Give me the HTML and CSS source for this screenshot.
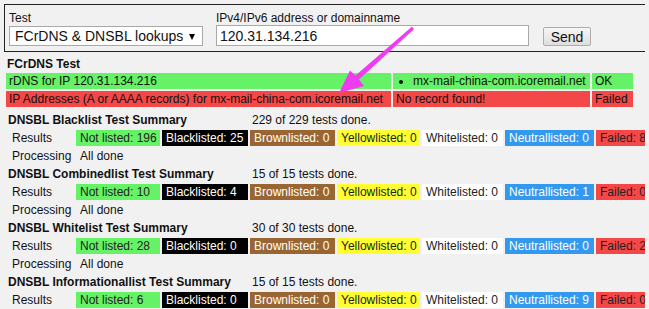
FILE: index.html
```html
<!DOCTYPE html>
<html lang="en">
<head>
  <meta charset="UTF-8">
  <title>FCrDNS &amp; DNSBL lookups</title>
  <link rel="stylesheet" href="styles.css">
</head>
<body>
  <form class="lookup">
    <div class="field field-test">
      <label>Test</label>
      <span class="select-wrap">
        <select>
          <option>FCrDNS &amp; DNSBL lookups</option>
        </select>
      </span>
    </div>
    <div class="field field-host">
      <label>IPv4/IPv6 address or domainname</label>
      <input type="text" value="120.31.134.216">
    </div>
    <button type="button">Send</button>
  </form>

  <h2 class="test-title">FCrDNS Test</h2>
  <table class="fcrdns">
    <colgroup>
      <col class="c-desc"><col class="c-result"><col class="c-status">
    </colgroup>
    <tr class="ok">
      <td>rDNS for IP 120.31.134.216</td>
      <td><ul><li>mx-mail-china-com.icoremail.net</li></ul></td>
      <td>OK</td>
    </tr>
    <tr class="fail">
      <td>IP Addresses (A or AAAA records) for mx-mail-china-com.icoremail.net</td>
      <td>No record found!</td>
      <td>Failed</td>
    </tr>
  </table>

  <table class="summary">
    <colgroup>
      <col class="c-label"><col class="c-not"><col class="c-black"><col class="c-brown">
      <col class="c-yellow"><col class="c-white"><col class="c-neutral"><col class="c-failed">
    </colgroup>

    <tr class="head">
      <th colspan="3">DNSBL Blacklist Test Summary</th>
      <td colspan="5">229 of 229 tests done.</td>
    </tr>
    <tr>
      <td class="label">Results</td>
      <td class="not-listed">Not listed: 196</td>
      <td class="blacklisted">Blacklisted: 25</td>
      <td class="brownlisted">Brownlisted: 0</td>
      <td class="yellowlisted">Yellowlisted: 0</td>
      <td class="whitelisted">Whitelisted: 0</td>
      <td class="neutrallisted">Neutrallisted: 0</td>
      <td class="failed">Failed: 8</td>
    </tr>
    <tr>
      <td class="label">Processing</td>
      <td colspan="7">All done</td>
    </tr>

    <tr class="head">
      <th colspan="3">DNSBL Combinedlist Test Summary</th>
      <td colspan="5">15 of 15 tests done.</td>
    </tr>
    <tr>
      <td class="label">Results</td>
      <td class="not-listed">Not listed: 10</td>
      <td class="blacklisted">Blacklisted: 4</td>
      <td class="brownlisted">Brownlisted: 0</td>
      <td class="yellowlisted">Yellowlisted: 0</td>
      <td class="whitelisted">Whitelisted: 0</td>
      <td class="neutrallisted">Neutrallisted: 1</td>
      <td class="failed">Failed: 0</td>
    </tr>
    <tr>
      <td class="label">Processing</td>
      <td colspan="7">All done</td>
    </tr>

    <tr class="head">
      <th colspan="3">DNSBL Whitelist Test Summary</th>
      <td colspan="5">30 of 30 tests done.</td>
    </tr>
    <tr>
      <td class="label">Results</td>
      <td class="not-listed">Not listed: 28</td>
      <td class="blacklisted">Blacklisted: 0</td>
      <td class="brownlisted">Brownlisted: 0</td>
      <td class="yellowlisted">Yellowlisted: 0</td>
      <td class="whitelisted">Whitelisted: 0</td>
      <td class="neutrallisted">Neutrallisted: 0</td>
      <td class="failed">Failed: 2</td>
    </tr>
    <tr>
      <td class="label">Processing</td>
      <td colspan="7">All done</td>
    </tr>

    <tr class="head">
      <th colspan="3">DNSBL Informationallist Test Summary</th>
      <td colspan="5">15 of 15 tests done.</td>
    </tr>
    <tr>
      <td class="label">Results</td>
      <td class="not-listed">Not listed: 6</td>
      <td class="blacklisted">Blacklisted: 0</td>
      <td class="brownlisted">Brownlisted: 0</td>
      <td class="yellowlisted">Yellowlisted: 0</td>
      <td class="whitelisted">Whitelisted: 0</td>
      <td class="neutrallisted">Neutrallisted: 9</td>
      <td class="failed">Failed: 0</td>
    </tr>
  </table>

  <!-- annotation arrow pointing at the domain -->
  <svg class="arrow" width="649" height="309" viewBox="0 0 649 309">
    <polygon points="414.2,29 411.8,26.8 355.5,75.5 350,70.5 339,93 364,86 359,79.5" fill="#f03cf0"/>
  </svg>
</body>
</html>
```

FILE: styles.css
```css
html {
  overflow: hidden;
  background: #f1f1f1;
}
body {
  margin: 4px;
  font-family: "Liberation Sans", Arial, sans-serif;
  font-size: 12px;
  color: #111;
  position: relative;
}

/* lookup form */
.lookup {
  display: flex;
  align-items: flex-end;
  width: 700px;
  padding: 6px 4px 5px 4px;
  border: 1px solid #222;
}
.field {
  display: flex;
  flex-direction: column;
}
.field label {
  line-height: 14px;
  margin-bottom: 1px;
}
.field-host {
  margin-left: 13px;
}
.field-host label {
  margin-bottom: 0;
}
.select-wrap {
  position: relative;
  display: block;
  height: 20px;
}
.select-wrap::after {
  content: "";
  position: absolute;
  right: 8px;
  top: 8px;
  border-left: 3.5px solid transparent;
  border-right: 3.5px solid transparent;
  border-top: 6px solid #000;
  pointer-events: none;
}
select {
  appearance: none;
  -webkit-appearance: none;
  display: block;
  width: 194px;
  height: 20px;
  margin: 0;
  padding: 0 0 0 5px;
  border: 1px solid #a9a9a9;
  border-radius: 0;
  background: #fff;
  font-family: inherit;
  font-size: 14px;
  color: #111;
}
input {
  display: block;
  width: 313px;
  height: 21px;
  margin: 0;
  padding: 0 3px;
  box-sizing: border-box;
  border: 1px solid #a9a9a9;
  background: #fff;
  font-family: inherit;
  font-size: 14px;
  color: #111;
}
button {
  margin-left: 14px;
  width: 48px;
  height: 19px;
  padding: 0;
  border: 1px solid #adadad;
  border-radius: 2px;
  background: linear-gradient(#f6f6f6, #dedede);
  font-family: inherit;
  font-size: 14px;
  color: #111;
}

/* result tables */
.test-title {
  margin: 5px 0 0 3px;
  font-size: 12px;
  line-height: 14px;
}
table {
  border-spacing: 2px;
  table-layout: fixed;
}
td, th {
  height: 16px;
  padding: 0 3px;
  line-height: 16px;
  text-align: left;
  white-space: nowrap;
  overflow: hidden;
}
.fcrdns {
  width: 631px;
}
.c-desc { width: 385px; }
.c-result { width: 197px; }
.c-status { width: 41px; }
.fcrdns ul {
  margin: 0;
  padding-left: 17px;
}
.ok td {
  background: #66f266;
}
.fail td {
  background: #f44848;
}

.summary {
  width: 649px;
  margin-top: 1px;
}
.c-label { width: 68px; }
.c-not { width: 84px; }
.c-black { width: 86px; }
.c-brown { width: 85px; }
.c-yellow { width: 83px; }
.c-white { width: 81px; }
.c-neutral { width: 89px; }
.c-failed { width: 55px; }
.summary th {
  padding-left: 2px;
}
.summary td {
  padding-left: 4px;
}
.summary td.label {
  padding-left: 6px;
}
.head td {
  padding-left: 2px;
}
.not-listed { background: #66f266; color: #222; }
.blacklisted { background: #000; color: #fff; }
.brownlisted { background: #996633; color: #fff; }
.yellowlisted { background: #ffff33; color: #222; }
.whitelisted { background: #fff; color: #222; }
.neutrallisted { background: #3399ee; color: #fff; }
.failed { background: #f44848; color: #222; }

.arrow {
  position: absolute;
  left: -4px;
  top: -4px;
  pointer-events: none;
}
```
